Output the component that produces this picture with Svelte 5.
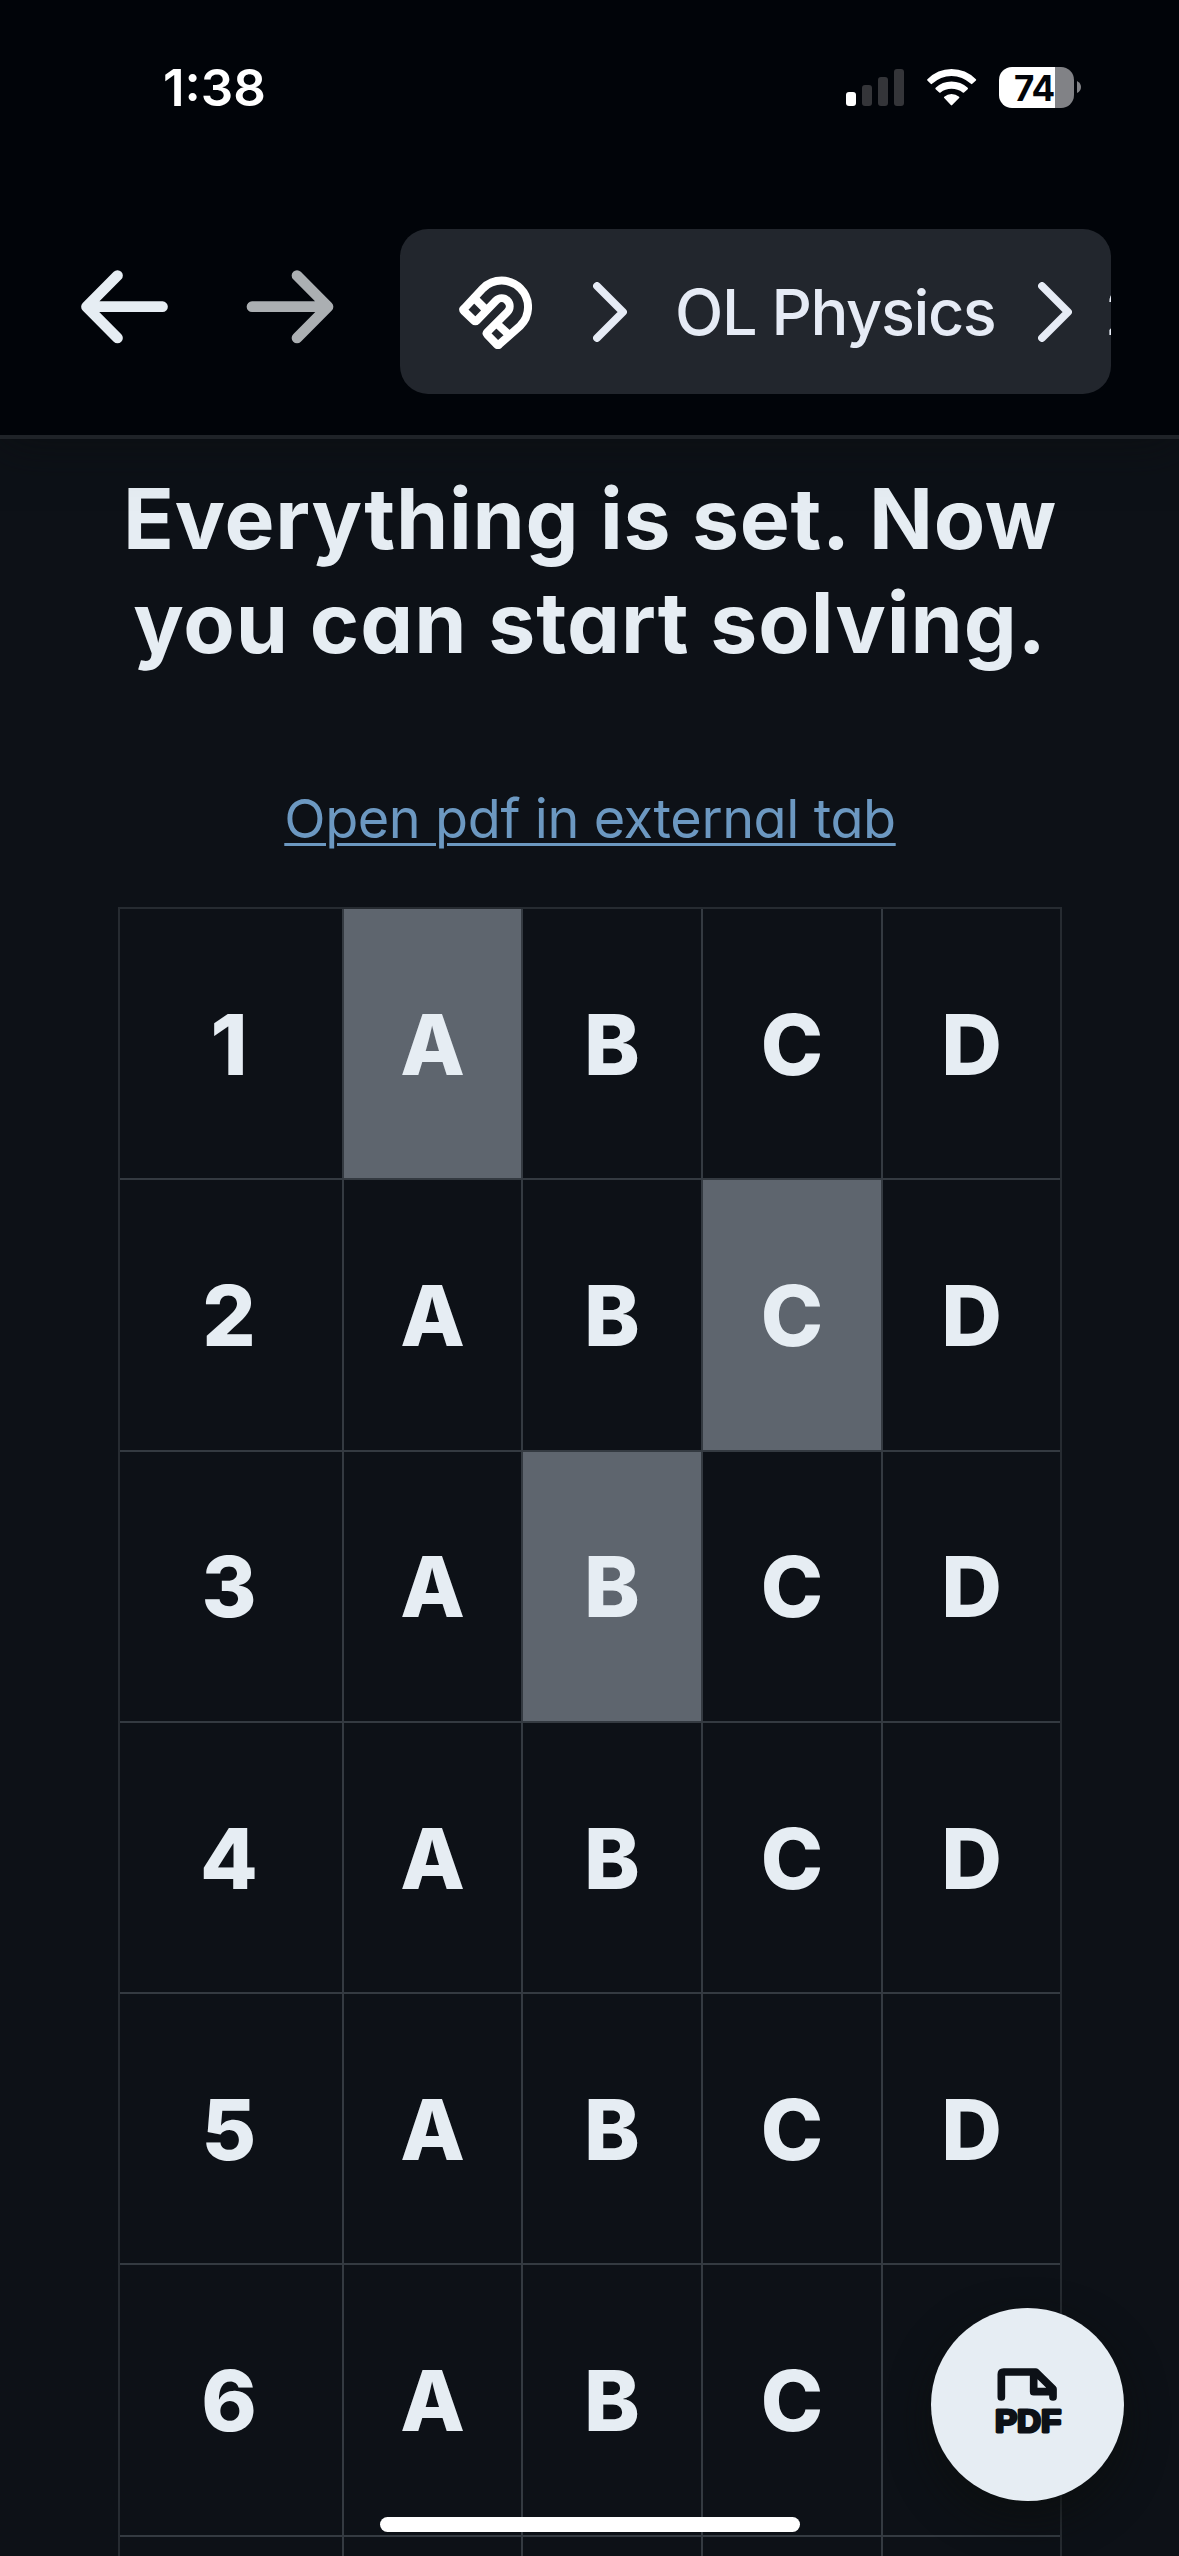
<script>
  const options = ['A', 'B', 'C', 'D'];
  const rows = [1, 2, 3, 4, 5, 6];
  let answers = $state({ 1: 'A', 2: 'C', 3: 'B' });

  function choose(row, option) {
    answers[row] = option;
  }
</script>

<div class="screen">
  <header class="top">
    <div class="status">
      <span class="clock">1:38</span>
      <div class="indicators">
        <svg class="signal" viewBox="0 0 58 37">
          <rect class="on" x="0" y="23" width="10" height="14" rx="3" />
          <rect x="16" y="16" width="10" height="21" rx="3" />
          <rect x="32" y="8" width="10" height="29" rx="3" />
          <rect x="48" y="0" width="10" height="37" rx="3" />
        </svg>
        <svg class="wifi" viewBox="0 0 150 112">
          <path d="M2 31 Q0 33 2 35 L12 45 Q14 47 16 45 Q42 21 75 21 Q108 21 134 45 Q136 47 138 45 L149 35 Q151 33 149 31 Q118 0 75 0 Q33 0 2 31 Z" />
          <path d="M27 57 Q25 59 27 61 L38 71 Q40 73 42 71 Q56 60 75 60 Q94 60 109 71 Q111 73 113 71 L124 61 Q126 59 124 57 Q103 38 75 38 Q47 38 27 57 Z" />
          <path d="M53 84 Q51 86 53 88 L73 109 Q75 112 77 109 L98 88 Q100 86 98 84 Q88 76 75 76 Q63 76 53 84 Z" />
        </svg>
        <div class="battery"><span>74</span></div>
        <svg class="nub" viewBox="0 0 4 12"><path d="M0 0 Q4 2 4 6 Q4 10 0 12 Z" /></svg>
      </div>
    </div>

    <nav class="bar">
      <svg class="arrow" viewBox="0 0 88 74">
        <path d="M36.5 5.5 L5.5 36.7 L36.5 68 M5.5 36.7 H81.5" />
      </svg>
      <svg class="arrow forward" viewBox="0 0 88 74">
        <path d="M51 5.5 L82 36.7 L51 68 M82 36.7 H6" />
      </svg>
      <div class="crumbs">
        <svg class="magnet" viewBox="207 168 219 219">
          <path d="M219 269 L279 205 A79 79 0 0 1 391 317 L328 373 Q324 377 320 373 L292 344 Q288 340 292 336 L352 276 A24 24 0 0 0 318 242 L260 302 Q256 306 252 302 L222 273 Q218 269 222 265 M260 241 L284 265 M323 313 L351 339" />
        </svg>
        <svg class="chev first" viewBox="0 0 34 60"><path d="M4 4 L30 30 L4 56" /></svg>
        <span class="crumb">OL Physics</span>
        <svg class="chev second" viewBox="0 0 34 60"><path d="M4 4 L30 30 L4 56" /></svg>
        <span class="crumb next">2</span>
      </div>
    </nav>
  </header>

  <main>
    <h1><span class="l1">Everything is set. Now</span><br /><span class="l2">you can start solving.</span></h1>
    <div class="link"><a href="#pdf">Open pdf in external tab</a></div>

    <div class="sheet">
      {#each rows as row}
        <div class="cell number">{row}</div>
        {#each options as option}
          <button class="cell" class:picked={answers[row] === option} onclick={() => choose(row, option)}>{option}</button>
        {/each}
      {/each}
      {#each [0, 1, 2, 3, 4] as blank (blank)}
        <div class="cell"></div>
      {/each}
    </div>
  </main>

  <button class="fab" aria-label="PDF">
    <svg viewBox="280 255 215 215">
      <path d="M305 351 V283 Q305 276 312 276 H408 L460 327 V351 M402 282 V335 H456" />
      <text x="286" y="455" textLength="199" lengthAdjust="spacingAndGlyphs">PDF</text>
    </svg>
  </button>
  <div class="home"></div>
</div>

<style>
  :global(body) { background: #0d1117; }

  .screen {
    position: relative;
    width: 1179px;
    height: 2556px;
    overflow: hidden;
    background: #0d1117;
    color: #e6edf3;
    font-family: Inter, "Liberation Sans", sans-serif;
    font-feature-settings: "cv11";
  }

  .top {
    position: relative;
    box-sizing: border-box;
    height: 439px;
    background: #010409;
    border-bottom: 4px solid #1f2328;
    box-shadow: 0 0 48px rgba(12, 14, 16, 0.7);
  }

  .status {
    display: flex;
    justify-content: space-between;
    align-items: flex-start;
    height: 162px;
    padding: 67px 98px 0 163px;
    box-sizing: border-box;
    color: #fff;
  }
  .clock {
    font-size: 51px;
    font-weight: 600;
    line-height: 41px;
  }
  .indicators { display: flex; height: 41px; }
  .signal { width: 58px; height: 37px; margin-top: 2px; fill: #343539; }
  .signal .on { fill: #fff; }
  .wifi { width: 51px; height: 37px; margin: 2px 22px 0 22px; fill: #fff; }
  .battery {
    width: 75px;
    height: 41px;
    border-radius: 13px;
    background: linear-gradient(to right, #fff 56px, #818286 56px);
    color: #010409;
    font-size: 35px;
    font-weight: 700;
    line-height: 42px;
  }
  .battery span { display: block; padding-left: 15px; letter-spacing: -0.8px; }
  .nub { width: 4px; height: 12px; margin: 14px 0 0 3px; fill: #818286; }

  .bar {
    display: flex;
    align-items: flex-start;
    padding: 67px 68px 0 80.5px;
  }
  .arrow {
    flex: none;
    width: 88px;
    height: 74px;
    margin-top: 41px;
    fill: none;
    stroke: #e6edf3;
    stroke-width: 10.7;
    stroke-linecap: round;
    stroke-linejoin: round;
  }
  .forward { margin-left: 77.5px; stroke: #abafb2; }
  .crumbs {
    display: flex;
    align-items: center;
    flex: none;
    box-sizing: border-box;
    width: 711px;
    height: 165px;
    margin-left: 66px;
    padding-left: 59px;
    border-radius: 28px;
    background: #22262d;
    overflow: hidden;
  }
  .magnet {
    flex: none;
    width: 73px;
    height: 73px;
    margin-bottom: -1px;
    fill: none;
    stroke: #fff;
    stroke-width: 24;
    stroke-linejoin: round;
  }
  .chev {
    flex: none;
    width: 34px;
    height: 60px;
    fill: none;
    stroke: #e6ebf5;
    stroke-width: 7.7;
    stroke-linecap: round;
    stroke-linejoin: round;
  }
  .first { margin-left: 61px; }
  .second { margin-left: 43px; }
  .crumb {
    flex: none;
    width: 320px;
    margin-left: 48px;
    color: #e6ebf5;
    font-size: 63px;
    font-weight: 450;
    line-height: 76px;
    letter-spacing: -1.4px;
    white-space: nowrap;
  }
  .next { width: 40px; margin-left: 33px; }

  main { padding: 28px 117px 0 118px; }
  h1 {
    margin: 0;
    font-size: 84px;
    font-weight: 700;
    line-height: 103.5px;
    text-align: center;
    white-space: nowrap;
  }
  .l1 { letter-spacing: 0.75px; }
  .l2 { letter-spacing: 0.95px; }
  .link {
    margin-top: 105px;
    height: 128px;
    font-size: 54px;
    font-weight: 400;
    line-height: 80px;
    letter-spacing: -0.42px;
    text-align: center;
    white-space: nowrap;
  }
  .link a {
    color: #6c98c1;
    text-decoration-thickness: 3px;
    text-underline-offset: 5px;
  }

  .sheet {
    display: grid;
    grid-template-columns: 222px 177px 178px 178px 177px;
    grid-auto-rows: 269.3px;
    gap: 2px;
    width: 940px;
    border: 2px solid #262b31;
    background: #343a41;
  }
  .cell {
    display: flex;
    align-items: center;
    justify-content: center;
    padding: 2px 0 0;
    border: 0;
    background: #0d1117;
    color: #e6edf3;
    font-family: inherit;
    font-feature-settings: inherit;
    font-size: 84px;
    font-weight: 850;
    line-height: 100px;
  }
  .number { padding-right: 4px; }
  .picked { background: #5e656e; }

  .fab {
    position: absolute;
    left: 931px;
    top: 2308px;
    display: grid;
    place-items: center;
    width: 193px;
    height: 193px;
    padding: 0;
    border: 0;
    border-radius: 50%;
    background: #e6edf3;
    box-shadow: 0 16px 40px rgba(12, 14, 13, 0.7);
  }
  .fab svg {
    width: 71.7px;
    height: 71.7px;
    margin-top: -7px;
    margin-left: 3px;
    fill: none;
    stroke: #0d1117;
    stroke-width: 23;
    stroke-linecap: round;
    stroke-linejoin: round;
  }
  .fab text {
    fill: #0d1117;
    stroke-width: 9;
    font-size: 94px;
    font-weight: 700;
  }
  .home {
    position: absolute;
    left: 380px;
    top: 2517px;
    width: 420px;
    height: 15px;
    border-radius: 8px;
    background: #fff;
  }
</style>
